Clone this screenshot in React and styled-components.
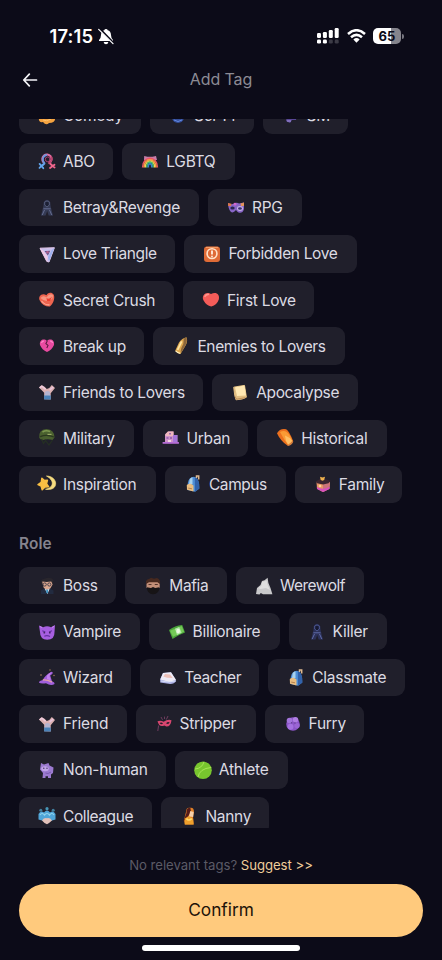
import React from 'react';
import styled, { createGlobalStyle } from 'styled-components';

const GlobalStyle = createGlobalStyle`
  * { box-sizing: border-box; }
  body {
    margin: 0;
    background: #0c0b18;
    font-family: Inter, "Liberation Sans", sans-serif;
    color: #dcdbe3;
    overflow: hidden;
  }
`;

const Screen = styled.div`
  width: 442px;
  height: 960px;
  display: flex;
  flex-direction: column;
  background: #0c0b18;
  overflow: hidden;
`;

const StatusBar = styled.header`
  height: 56px;
  padding: 16px 38px 0 49.5px;
  display: flex;
  justify-content: space-between;
  align-items: center;
`;

const StatusGroup = styled.div`
  display: flex;
  align-items: center;
  gap: ${(p) => p.$gap}px;
`;

const Clock = styled.span`
  width: 44.5px;
  font-size: 18.4px;
  font-weight: 600;
  letter-spacing: 0.15px;
  white-space: nowrap;
  color: #fff;
`;

const Battery = styled.div`
  display: flex;
  align-items: center;
  gap: 1px;
  &::after {
    content: "";
    width: 2px;
    height: 5px;
    border-radius: 0 2px 2px 0;
    background: #77767f;
  }
`;

const BatteryLevel = styled.div`
  width: 28px;
  height: 16px;
  border-radius: 5px;
  background: linear-gradient(to right, #fff 65%, #85848c 65%);
  color: #0c0b18;
  font-size: 13px;
  font-weight: 700;
  line-height: 16px;
  text-align: center;
`;

const NavBar = styled.nav`
  height: 62.6px;
  padding: 0 19px 17px;
  display: grid;
  grid-template-columns: 40px 1fr 40px;
  align-items: center;
`;

const BackButton = styled.button`
  border: 0;
  padding: 3px 0 0 3px;
  background: none;
  display: flex;
`;

const Title = styled.h1`
  margin: 0;
  font-size: 16px;
  font-weight: 400;
  letter-spacing: -0.1px;
  text-align: center;
  color: #8c8b95;
`;

const TagScroll = styled.main`
  height: 709.4px;
  overflow: hidden;
  padding: 0 19px;
`;

const TagList = styled.div`
  margin-top: -21.6px;
`;

const Rows = styled.section`
  display: flex;
  flex-direction: column;
  gap: 8.8px;
`;

const Row = styled.div`
  display: flex;
  gap: 9px;
`;

const Chip = styled.button`
  flex: none;
  width: ${(p) => p.$width}px;
  height: 37.3px;
  border: 0;
  border-radius: 9px;
  padding: 0 0 0 18px;
  background: #201f2b;
  color: #dcdbe3;
  display: flex;
  align-items: center;
  gap: 6px;
  font: 400 15.5px Inter, "Liberation Sans", sans-serif;
  letter-spacing: ${(p) => p.$spacing}px;
  white-space: nowrap;
`;

const ChipIcon = styled.svg`
  flex: none;
  width: 20px;
  height: 20px;
  overflow: visible;
`;

const SectionTitle = styled.h2`
  margin: 0;
  height: 63.9px;
  padding-top: 31px;
  font-size: 15.4px;
  font-weight: 600;
  line-height: 20px;
  letter-spacing: 0.1px;
  color: #85848e;
`;

const Footer = styled.footer`
  padding: 27.4px 19px 0;
  display: flex;
  flex-direction: column;
  align-items: center;
`;

const Hint = styled.p`
  margin: 0;
  height: 28.6px;
  line-height: 20px;
  font-size: 13.2px;
  letter-spacing: -0.05px;
  color: #5b5a66;
  white-space: nowrap;
`;

const SuggestLink = styled.span`
  color: #f0cd9a;
`;

const ConfirmButton = styled.button`
  width: 100%;
  height: 53px;
  border: 0;
  border-radius: 27px;
  padding: 0 0 1px;
  background: #ffca7d;
  color: #1d1309;
  font: 400 17.3px Inter, "Liberation Sans", sans-serif;
  letter-spacing: 0;
`;

const HomeIndicator = styled.div`
  width: 158px;
  height: 5.5px;
  margin-top: 8.3px;
  border-radius: 3px;
  background: #fff;
`;

const icons = {
  comedy: <><path d="M2 11Q1 17 6 16Q9 20 12 17Q19 17 18 11Z" fill="#f5a340" /><path d="M6 14Q9 16 14 13" stroke="#ffc36f" fill="none" /></>,
  scifi: <><circle cx="10" cy="11" r="6" fill="#344d99" /><path d="M6 14Q10 17 14 14" stroke="#638ae2" fill="none" /></>,
  sm: <><path d="M6 10L16 9L15 14L11 14L9 17L5 15Z" fill="#594795" /><path d="M6 15L10 15" stroke="#aa98e2" /></>,
  abo: (
    <g fill="none" strokeLinecap="round">
      <path d="M7.5 11.5L4.3 14.5M2.6 11.9L6.3 16.2M2.5 15.8L6 12.5" stroke="#62a6ed" strokeWidth="1.8" />
      <path d="M12.5 11L15.7 14M13 16L17.5 12.7M14.2 12.7L17.6 15.5" stroke="#ef668d" strokeWidth="1.8" />
      <path d="M6.4 10A4.6 4.6 0 1 1 12.7 10.7" stroke="#e36da1" strokeWidth="2.1" />
      <path d="M7.4 11A4.6 4.6 0 0 1 9.4 3" stroke="#7095dc" strokeWidth="1.8" />
      <path d="M14.4 5A4.6 4.6 0 0 1 12 11" stroke="#bd456e" strokeWidth="1.8" />
      <circle cx="10.7" cy="7.3" r="2.4" stroke="#aa3e73" />
    </g>
  ),
  rainbow: (
    <g fill="none" strokeWidth="1.5">
      <path d="M4.2 4L7.5 4.8H12.5L16 4L17 8H4Z" fill="#c77da8" />
      <path d="M2.6 15.5C2.6 3.2 17.4 3.2 17.4 15.5" stroke="#ef5564" />
      <path d="M4 15.5C4 5 16 5 16 15.5" stroke="#f89a42" />
      <path d="M5.4 15.5C5.4 6.8 14.6 6.8 14.6 15.5" stroke="#f3d656" />
      <path d="M6.8 15.5C6.8 8.6 13.2 8.6 13.2 15.5" stroke="#43be70" />
      <path d="M8.2 15.5C8.2 10.5 11.8 10.5 11.8 15.5" stroke="#3b87ca" />
    </g>
  ),
  assassin: (
    <g>
      <path d="M6.8 4Q10 -.5 13.2 4L13.6 8L16 17.8L11.6 17.6L10.2 13L8.6 17.6L4 17.8L6.4 8Z" fill="#343a54" />
      <path d="M7.7 4Q10 2 12.3 4V7L10 9L7.7 7Z" fill="#1c2034" stroke="#616888" strokeWidth=".8" />
      <path d="M6.4 10.8H13.6M5.2 17L7.5 12M14.8 17L12.5 12" stroke="#6b7398" strokeWidth=".9" />
    </g>
  ),
  killer: (
    <g>
      <path d="M6.8 4Q10 -.5 13.2 4L13.6 8L16 17.8L11.6 17.6L10.2 13L8.6 17.6L4 17.8L6.4 8Z" fill="#2c3158" />
      <path d="M7.7 4Q10 2 12.3 4V7L10 9L7.7 7Z" fill="#171a33" stroke="#5562a2" strokeWidth=".8" />
      <path d="M6.4 10.8H13.6M5.2 17L7.5 12M14.8 17L12.5 12" stroke="#6470b0" strokeWidth=".9" />
    </g>
  ),
  masks: (
    <g>
      <path d="M2 5Q5 7 8 5.5Q11 4 13 5.5L18 4.5V11Q16.5 16 12.5 14.5Q11 13.5 10 12Q7 16 4.5 13.5Q2.3 11 2 5Z" fill="#8865c6" />
      <path d="M2 5L5.5 5.8L5 8L2.2 8Z" fill="#df7648" /><path d="M14.5 5.4L18 4.5V8H15Z" fill="#e3935a" />
      <ellipse cx="6.5" cy="10" rx="2.2" ry="1.5" fill="#292451" /><ellipse cx="14" cy="10.5" rx="2.5" ry="1.9" fill="#38306e" stroke="#c6b0e7" strokeWidth="1.1" />
      <circle cx="9" cy="6.2" r="1.4" fill="#d267cb" />
    </g>
  ),
  triangle: (
    <g>
      <path d="M3 4.2L17.4 3.7L12 18L9.8 17.4Z" fill="#c9c0ed" stroke="#e4c8ea" strokeLinejoin="round" />
      <path d="M17.4 3.7L12 18L11 13L14.5 6.5Z" fill="#9cb0ef" /><path d="M3 4.2L10 17.4L10.9 13L6.5 7Z" fill="#f0c8e4" />
      <path d="M7.6 7L13.2 6.7L10.9 11.4Z" fill="#604a82" /><circle cx="10.5" cy="8.3" r="1.3" fill="#b2628f" />
    </g>
  ),
  forbidden: (
    <g><rect x="2" y="2.5" width="16" height="15.5" rx="3" fill="#df6b36" /><path d="M4 3.4h12" stroke="#f7a46c" /><circle cx="10" cy="9.6" r="4.9" fill="none" stroke="#ffe2c9" strokeWidth="1.6" /><path d="M10 6.4v4.2" stroke="#fff1e3" strokeWidth="1.8" /><circle cx="10" cy="12.4" r=".9" fill="#fff1e3" /></g>
  ),
  crush: (
    <g><path d="M9.5 5.2C5 2.2 .5 6.3 2.8 10.5Q5.5 16.5 12.8 16.5C16 14.5 18.3 8.5 16.8 4.8C14.8 1.4 10.3 2.4 9.5 5.2Z" fill="#ee6550" /><path d="M3.5 8Q6 4.6 9.4 7.4Q13 2.8 15.9 5Q16.6 9 12.5 10.5Q8 12.5 3.5 8Z" fill="#f59681" /><path d="M4.5 11Q8 15.5 12.5 14.8" fill="none" stroke="#ffad99" strokeWidth="1.1" /><path d="M9.5 8Q12 10 15 6.5L13 11L10 11Z" fill="#ee3f30" /></g>
  ),
  heart: (
    <g><path d="M10 4.1C5.5 1 -.2 5.4 2.6 10.6Q5.2 15.6 10.3 16.6Q16 15 17.8 9.5C19.2 3.8 14.5 1.4 10 4.1Z" fill="#f45c59" /><path d="M4 6.4Q5 4.3 7.3 4.4" fill="none" stroke="#ff958b" strokeWidth="1.6" strokeLinecap="round" /></g>
  ),
  broken: (
    <g><path d="M10 5C7 2 2 4 3 9Q5 13.8 10 16Q15 13.8 17 9C18 4 13 2 10 5Z" fill="#e84aa0" /><path d="M4.5 7Q5.2 5 7 5.2M13 5.2Q15 5 15.6 7" fill="none" stroke="#ff86c8" strokeWidth="1.3" /><path d="M10.3 5L8.9 7.6L11 9.4L9.8 12" stroke="#5a1c40" strokeWidth="1.1" fill="none" /></g>
  ),
  bullet: (
    <g><path d="M4.2 14.8L8 6.5Q11 2 15.5 1.2Q17.2 6 14 10.5L9.5 17.9Q6 17.4 4.2 14.8Z" fill="#dfa84e" /><path d="M12.8 2.5L15.4 1.4Q16.8 6 13.8 10.5L9.8 17Q9 14 12.3 8Z" fill="#8d673b" /><path d="M6.6 13.8L10.7 5.4" stroke="#ffe5a3" strokeWidth="1.8" /><path d="M4.6 14.9Q6.5 17 9.2 17.4" stroke="#fff0c0" strokeWidth="1.2" fill="none" /></g>
  ),
  hands: (
    <g><path d="M2 5.5L4.4 3.2Q8 4.5 9.8 7L12.3 6L14.8 3L18 6L13.7 11.2L13.8 17.5L7.2 17.3V10.8Z" fill="#dbb1b2" /><path d="M7.1 13.5Q10.5 12 13.8 13.5V17.5H7.1Z" fill="#4b82b8" /><path d="M8 10Q10.5 8 13 10V13.4H7.8Z" fill="#b4b3ce" /><path d="M2.6 5.9L5 4.1L8.6 7.4" fill="none" stroke="#efcbdc" strokeWidth="1.5" /><path d="M12.6 8L16.2 5" stroke="#eac5df" strokeWidth="1.6" /></g>
  ),
  paper: (
    <g><path d="M3.7 5.2Q9 4.2 14.5 3.4L16.4 15.2Q13 17.5 6 17.8L4.7 13Z" fill="#e2be82" stroke="#e2be82" strokeLinejoin="round" /><path d="M5 5.2L14.5 3.5L16 13.4L7 14Z" fill="#ffe8b3" /><path d="M5 14.5L6.6 17.2L15.4 15.7" stroke="#be8f5a" strokeWidth="1" fill="none" /></g>
  ),
  helmet: (
    <g><path d="M2.3 10Q1.2 1.2 9.5 .9Q17.5 1.5 17.5 9.5L15.5 12Q10 10.5 5 12.5Z" fill="#4a602f" /><path d="M5.5 4Q9 1.8 13 3.6" stroke="#7e9950" strokeWidth="1.6" fill="none" /><path d="M3.2 8.7Q9.5 5.8 17 9" stroke="#2b3920" strokeWidth="1.3" fill="none" /><path d="M4.6 11L6.5 15.5L8.5 12.5L12 17L15.5 12" stroke="#253023" strokeWidth="1.2" fill="none" /><path d="M10.5 6.4h4" stroke="#9aaa67" strokeWidth="1.2" /></g>
  ),
  city: (
    <g><path d="M4 15V6.5L7 3.5H12.5V7H16.4V15Z" fill="#cf93c9" /><path d="M4.5 6L7 3.6H12.5V8H4.5Z" fill="#efb7bd" /><path d="M12 7h4.4v8H12z" fill="#a575d8" /><path d="M5.5 9h2v2h-2zM9 9h2v2H9zM8 5h2v1.5H8z" fill="#9b69b1" /><path d="M7 12h3v2H7z" fill="#f2d5e2" /><path d="M1.6 14H17.9V15.8H1.6Z" fill="#b56cd4" /></g>
  ),
  lantern: (
    <g><path d="M2 5.2Q5 0 11.2 1.2Q14.5 3.5 18 12.8Q16.5 16.5 12.7 17.7Q5.5 13 2 5.2Z" fill="#ec701e" /><path d="M5 4Q11 1 15 8L17.5 13L13.2 17Q9 12 5 4Z" fill="#fa9b35" /><path d="M10 7.5Q14.5 9 17.3 13L13.2 16.7Q10.3 13 10 7.5Z" fill="#ffbf65" /><path d="M12.8 17.5Q16.5 16.5 17.8 13.2" stroke="#d58141" strokeWidth="1.2" fill="none" /></g>
  ),
  star: (
    <g><path d="M9.5 2C16.5 2 20.3 8 18 12.2C16.5 15.3 12 16 8.5 15.2C16 14.2 18.6 7 9.5 2Z" fill="#f6dc80" stroke="#f6dc80" strokeWidth=".7" /><path d="M4.9 4.2L7.2 6.4L10.4 6.2L9.5 9.8L11.6 12.7L8 13L5.2 15.8L4.2 12.2L1 10.6L4.2 8.5Z" fill="#f8be43" stroke="#f8be43" strokeWidth="1.5" strokeLinejoin="round" /></g>
  ),
  bag: (
    <g><path d="M4.8 9Q6 3 11 2.8Q16.4 3.4 16.3 14.6L12 17.8L4.5 16Z" fill="#4f8fd6" /><path d="M11.8 3Q16.8 5 16.3 14.8L12 17.8Z" fill="#3262aa" /><path d="M13.5 4V2H15.7V5.5" fill="none" stroke="#dfba91" strokeWidth="1.5" /><path d="M6.8 5Q8 3.4 9.5 3.2V10H6Z" fill="#a9d2ee" /><path d="M3.8 11Q7.5 8.5 10.5 11.5V17.5L4 15.8Z" fill="#eabd80" /><path d="M5.2 14.1L9 14.8" stroke="#b6834f" /></g>
  ),
  family: (
    <g><path d="M3.5 8H17L16.4 14.7L10 18L4 14.8Z" fill="#e99467" /><path d="M10 10L17 8L16.4 14.7L10 18Z" fill="#cb7479" /><path d="M3.9 13Q10 16.7 16.6 12.8L16.4 14.9L10 18L4 14.9Z" fill="#d750bd" /><path d="M2.5 7.4L8.5 4.3L17.7 6.8L15.5 9.2L10 10.6L4 9.2Z" fill="#3a2530" /><path d="M7 2.8L9.5 3.6L12 2.8L11.2 6L9.5 6.8L7.7 6Z" fill="#efb24e" /><circle cx="7" cy="12" r="1.3" fill="#ffd596" /></g>
  ),
  boss: (
    <g><path d="M5 5H15.5V8.5L13.3 12.5L10 14L6.8 12Z" fill="#dba78e" /><path d="M4 8.5Q2.8 2.8 7.6 2.7Q13.4 .4 16.5 4L15.8 8.4L14.2 5.6Q9 6.4 5.4 5.5Z" fill="#29262d" /><circle cx="7.7" cy="8.5" r="1.6" fill="none" stroke="#48404a" /><circle cx="12.3" cy="8.5" r="1.6" fill="none" stroke="#48404a" /><path d="M4 14.5L7.5 12.4L10 14.5L13 12.4L16.5 14.5V18H4Z" fill="#222b40" /><path d="M7.6 12.5L10 13.8L12.7 12.5L10.5 18Z" fill="#d7e5f2" /><path d="M10.1 13.8V17" stroke="#328bbb" strokeWidth="1.6" /></g>
  ),
  mafia: (
    <g><path d="M3.5 5H16.7V12H3.5Z" fill="#c38f78" /><path d="M3 8Q2.3 3.5 6 3L8 1.8L11 2.7L14 2Q18 3.8 16.9 8L14.5 6.3H6Z" fill="#47291f" /><path d="M3.8 11.3L8 12L10 10.9L12.2 12L16.4 11.3Q16.5 18 10 18.3Q4 18 3.8 11.3Z" fill="#171416" /><path d="M5.5 8.5h3M11.8 8.5h3" stroke="#54342b" strokeWidth="1.2" /></g>
  ),
  wolf: (
    <g><path d="M2 18L3 12L6.5 9L8 5L10.5 4.2L13.6 1.8L14.4 7L16.5 12L18.4 18.3H9L6.8 17L5.5 18.5Z" fill="#c9c9cb" /><path d="M8 6L12.6 4.4L13.6 9L16 14L12 12L6.5 13L4.5 12.2L7.4 9.8Z" fill="#dfdfe0" /></g>
  ),
  devil: (
    <g><path d="M3 10L2 3.5L6.2 5.3Q10 3.4 14 5.3L18 3L17.5 10Q17.8 17.8 10.2 17.8Q3 17.5 3 10Z" fill="#a75fe0" /><path d="M5.3 8.7L8.3 10M15 8.7L12 10M7.3 14.2Q10 13 13 14.4" stroke="#6531a0" strokeWidth="1.1" fill="none" /><circle cx="7.3" cy="10.7" r=".9" fill="#432563" /><circle cx="12.8" cy="10.7" r=".9" fill="#432563" /><path d="M3 4.6L5 5.6M17 4.3L15 5.6" stroke="#c88ced" /></g>
  ),
  cash: (
    <g><path d="M2 8Q8 3.5 15.2 3L18 10.5Q11 13 5.5 17Z" fill="#4ba33b" /><path d="M3 8.8L14.7 4L17 9.7L6 14.8Z" fill="#74c957" /><path d="M8 6.7L12.2 5L14.6 10.8L10 13Z" fill="#b2e8a8" /><ellipse cx="11.2" cy="9" rx="1.8" ry="2.3" fill="#eaf7e0" /></g>
  ),
  wizard: (
    <g><path d="M6 12Q8 7 14.5 3.8Q16.5 4.2 15.2 6L13.2 7.5L15 13.2Q18 14.5 17.6 16Q14 18.2 9 15.3Q4 16 2 14.8Q2 12.8 6 12Z" fill="#a15fdb" /><path d="M10 7.5Q12 5 14.5 4L12.4 8L13.7 12.5L10 11Z" fill="#c281ee" /><path d="M5.8 12Q10 11.5 15 14.2" stroke="#e2a0a8" strokeWidth="1.4" fill="none" /><circle cx="4" cy="7" r=".8" fill="#b28b65" /><circle cx="13" cy="2" r=".7" fill="#a8845d" /><circle cx="17" cy="7.5" r=".7" fill="#a8845d" /></g>
  ),
  book: (
    <g><path d="M5 5L13 4.2L18.2 13Q16 16.2 12 16L2.2 14.5V11Z" fill="#aaaee2" /><path d="M5 5L13 4.2L18 11.8L11.5 14L2.4 11.5Z" fill="#eeeaf5" /><path d="M7 6L12 6.4L14.7 10L9 9.8L5.4 8.5Z" fill="#edc0b8" /><path d="M3 13Q10 15 17.5 13" stroke="#dde3fa" strokeWidth=".9" fill="none" /></g>
  ),
  mask: (
    <g><path d="M3.5 7.2Q7 6 9.6 7.8Q13.5 5 17.5 6.2Q16.7 12.8 12.3 12.6L10.3 11.4Q5.3 13.8 3.5 7.2Z" fill="#d94770" /><path d="M5.5 9Q7.5 7.6 9 9.6Q7.5 11.3 5.5 9ZM12 9.3Q14 7.3 15.7 8.5Q14.5 11 12 9.3Z" fill="#271e2b" /><path d="M4.6 11.5L3.8 17M7 3L8.5 5.8M10.5 2.6V5M14 2l-1.7 3.6" stroke="#774064" strokeWidth=".9" /></g>
  ),
  furry: (
    <g><circle cx="10" cy="10" r="6.8" fill="#8b55c7" /><circle cx="6.5" cy="6.5" r="2.8" fill="#a374dc" /><circle cx="12.5" cy="5.7" r="2.7" fill="#af7de2" /><circle cx="7.5" cy="12.8" r="3" fill="#a571e0" /><circle cx="14" cy="11.6" r="2.7" fill="#9a65d4" /><circle cx="8.5" cy="8.7" r=".7" fill="#63428f" /><circle cx="12" cy="9" r=".7" fill="#63428f" /></g>
  ),
  creature: (
    <g><path d="M4 3L7 4.5L11.5 3L12.5 5.5L16.5 7.5L16 13L14 14.5V18H11V16.3H8.5V18H5.5L6 13L3 9.5Z" fill="#9b7ad0" strokeLinejoin="round" /><ellipse cx="8" cy="8.7" rx="3.8" ry="2.5" fill="#c1a4e9" /><circle cx="6.8" cy="8.2" r=".7" fill="#40335d" /><circle cx="10" cy="8.2" r=".7" fill="#40335d" /><path d="M8.4 13Q11 14.5 14 12" stroke="#7959b0" fill="none" /></g>
  ),
  tennis: (
    <g><circle cx="10" cy="10.3" r="8.8" fill="#78c52e" /><path d="M2 9Q9 8.5 11 1.8M5 17Q6.5 8.5 18.2 7.5" fill="none" stroke="#a9e458" strokeWidth="1" /></g>
  ),
  team: (
    <g><path d="M1.5 8Q3.7 3.8 7 6.5Q10 2.5 13 6.5Q16.3 3.8 18.5 8V13.5Q10 17 1.5 13.5Z" fill="#50a5d8" /><circle cx="3.8" cy="4.2" r="1.5" fill="#427f9e" /><circle cx="10" cy="2.7" r="1.6" fill="#4694b5" /><circle cx="16.2" cy="4.2" r="1.5" fill="#427f9e" /><path d="M3 9Q5 6 7.5 9Q10 6 12.5 9Q15 6 17 9" stroke="#91d5ee" strokeWidth="1.2" fill="none" /><path d="M5 14.5Q7 11.5 10 12.2Q13 11.5 15 14.5L12 17L10 18.3L7.5 17Z" fill="#e1c1ba" /></g>
  ),
  nanny: (
    <g><path d="M7 6Q7 1.3 11 1.8Q15 1 15 6L14 10.5L14.8 18.5H6L5 14Z" fill="#e18129" /><path d="M7.5 7Q7 1.7 11.3 1.5L12 5.8L9 10.5L4 16Z" fill="#551b18" /><path d="M11.2 5L14.7 6L14.2 11L10 10.5Z" fill="#f7d1aa" /><path d="M5.7 12.5L9.5 10.3L14 12.5L14.5 18.6H5.7Z" fill="#efa02c" /><path d="M7.5 12.5Q9.5 15.5 12.8 12.7" stroke="#ffdb70" strokeWidth="1.6" fill="none" /></g>
  ),
};

const loveRows = [
  [['comedy', 'Comedy', 122], ['scifi', 'Sci-Fi', 103.5], ['sm', 'SM', 85.5]],
  [['abo', 'ABO', 94.3], ['rainbow', 'LGBTQ', 113]],
  [['assassin', 'Betray&Revenge', 180], ['masks', 'RPG', 93.5]],
  [['triangle', 'Love Triangle', 156.4, -0.38], ['forbidden', 'Forbidden Love', 172.5, -0.34]],
  [['crush', 'Secret Crush', 155], ['heart', 'First Love', 131.3]],
  [['broken', 'Break up', 125.4], ['bullet', 'Enemies to Lovers', 191.8, -0.35]],
  [['hands', 'Friends to Lovers', 184.2], ['paper', 'Apocalypse', 145.6, -0.35]],
  [['helmet', 'Military', 114.5], ['city', 'Urban', 105.7], ['lantern', 'Historical', 129.5]],
  [['star', 'Inspiration', 137], ['bag', 'Campus', 120.8, -0.45], ['family', 'Family', 107.7]],
];

const roleRows = [
  [['boss', 'Boss', 97.3], ['mafia', 'Mafia', 101.7, -0.4], ['wolf', 'Werewolf', 128.5, -0.5]],
  [['devil', 'Vampire', 120.6], ['cash', 'Billionaire', 131], ['killer', 'Killer', 98]],
  [['wizard', 'Wizard', 112.3], ['book', 'Teacher', 119, -0.4], ['bag', 'Classmate', 137]],
  [['hands', 'Friend', 107.6, -0.15], ['mask', 'Stripper', 120], ['furry', 'Furry', 99.8]],
  [['creature', 'Non-human', 146.7], ['tennis', 'Athlete', 113, -0.2]],
  [['team', 'Colleague', 133.4, -0.4], ['nanny', 'Nanny', 108]],
];

function TagRows({ rows }) {
  return (
    <Rows>
      {rows.map((row, i) => (
        <Row key={i}>
          {row.map(([icon, label, width, spacing = -0.28]) => (
            <Chip key={label} $width={width} $spacing={spacing}>
              <ChipIcon viewBox="0 0 20 20" aria-hidden="true">{icons[icon]}</ChipIcon>
              <span>{label}</span>
            </Chip>
          ))}
        </Row>
      ))}
    </Rows>
  );
}

function MutedBell() {
  return (
    <svg width="16" height="17" viewBox="0 0 16 17">
      <path d="M8 1Q9.5 1 9.7 2.2Q12.8 3 13 7Q13 10 15 12V13H1V12Q3 10 3 7Q3.2 3 6.3 2.2Q6.5 1 8 1ZM5.6 14H10.4Q10 16.3 8 16.3Q6 16.3 5.6 14Z" fill="#fff" />
      <path d="M2 1L15.8 15.2" stroke="#0c0b18" strokeWidth="2" />
      <path d="M.7 1.4L15 15.7" stroke="#fff" strokeWidth="1.2" strokeLinecap="round" />
    </svg>
  );
}

function Signal() {
  return (
    <svg width="22" height="16" viewBox="0 0 22 16" fill="#fff">
      <rect x="0" y="5" width="4" height="5" rx="1.2" /><rect x="5.9" y="4" width="4" height="6" rx="1.2" />
      <rect x="11.8" y="2" width="4" height="8" rx="1.2" /><rect x="17.7" y="0" width="4" height="10" rx="1.2" />
      <rect x="0" y="11.6" width="4" height="4" rx="1.3" /><rect x="5.9" y="11.6" width="4" height="4" rx="1.3" />
      <g fill="#3c3b46"><rect x="11.8" y="11.6" width="4" height="4" rx="1.3" /><rect x="17.7" y="11.6" width="4" height="4" rx="1.3" /></g>
    </svg>
  );
}

function Wifi() {
  return (
    <svg width="19" height="14" viewBox="0 0 19 14" fill="none" stroke="#fff" strokeWidth="2.5">
      <path d="M1 5Q9.5-2.6 18 5" /><path d="M4 8.3Q9.5 3.4 15 8.3" />
      <path d="M6.4 10.4Q9.5 7.8 12.6 10.4L9.5 13.8Z" fill="#fff" stroke="none" />
    </svg>
  );
}

export default function App() {
  return (
    <>
      <GlobalStyle />
      <Screen>
        <StatusBar>
          <StatusGroup $gap={4}><Clock>17:15</Clock><MutedBell /></StatusGroup>
          <StatusGroup $gap={7.5}>
            <Signal /><Wifi />
            <Battery><BatteryLevel>65</BatteryLevel></Battery>
          </StatusGroup>
        </StatusBar>
        <NavBar>
          <BackButton aria-label="Back">
            <svg width="16" height="14" viewBox="0 0 16 14" fill="none" stroke="#f4f4f7" strokeWidth="1.7" strokeLinecap="round" strokeLinejoin="round">
              <path d="M14.5 7H2M7.3 1.2L1.8 7L7.3 12.8" />
            </svg>
          </BackButton>
          <Title>Add Tag</Title>
        </NavBar>
        <TagScroll>
          <TagList>
            <TagRows rows={loveRows} />
            <SectionTitle>Role</SectionTitle>
            <TagRows rows={roleRows} />
          </TagList>
        </TagScroll>
        <Footer>
          <Hint>No relevant tags? <SuggestLink>Suggest &gt;&gt;</SuggestLink></Hint>
          <ConfirmButton>Confirm</ConfirmButton>
          <HomeIndicator />
        </Footer>
      </Screen>
    </>
  );
}
